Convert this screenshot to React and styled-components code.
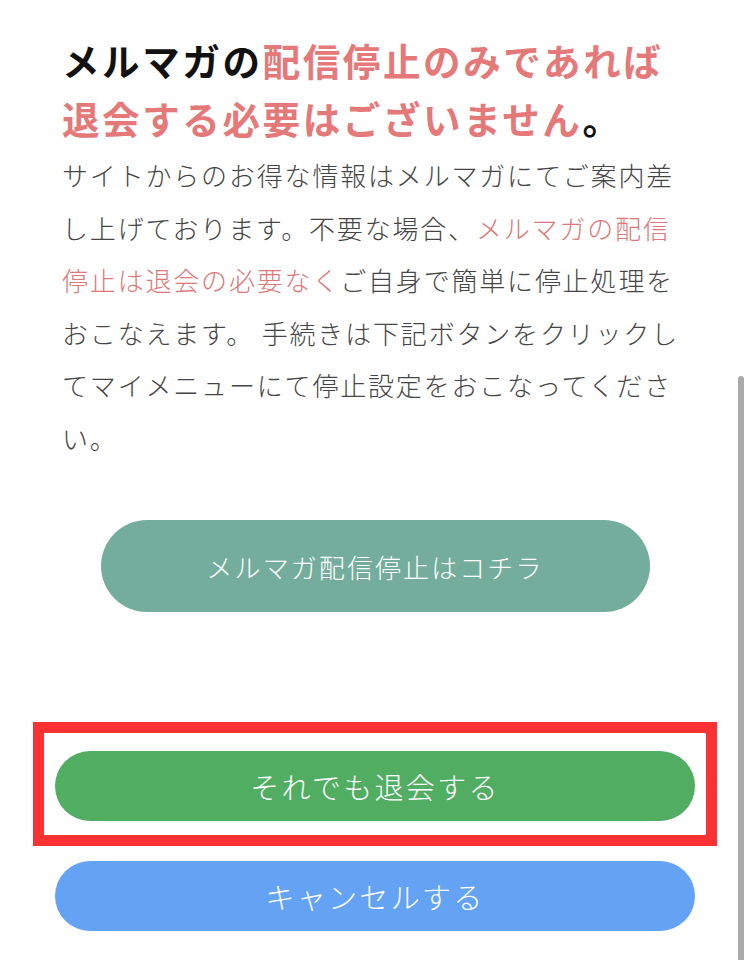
import React from 'react';
import styled, { createGlobalStyle } from 'styled-components';

const GlobalStyle = createGlobalStyle`
  html, body {
    margin: 0;
    padding: 0;
    background: #fff;
  }
  body {
    font-family: "Noto Sans CJK JP", "Noto Sans", sans-serif;
    overflow: hidden;
  }
`

const Page = styled.div`
  position: relative;
  width: 750px;
  height: 960px;
  display: flex;
  flex-direction: column;
  align-items: center;
  padding-top: 31px;
  box-sizing: border-box;
`

const Text = styled.div`
  width: 626px;
  align-self: flex-start;
  margin-left: 62px;
`

const Title = styled.h2`
  margin: 0;
  font-size: 37.5px;
  line-height: 58px;
  font-weight: 700;
  letter-spacing: 0.07em;
  color: #111;
`

const Pink = styled.span`
  color: ${p => (p.$soft ? '#dd7878' : '#e57878')};
`

const Body = styled.p`
  margin: 2px 0 0;
  font-size: 26px;
  line-height: 52.5px;
  font-weight: 300;
  letter-spacing: 0.07em;
  color: #454545;
`

const PillButton = styled.button`
  display: flex;
  align-items: center;
  justify-content: center;
  border: none;
  border-radius: 999px;
  width: ${p => p.$w}px;
  height: ${p => p.$h}px;
  background: ${p => p.$bg};
  color: #fff;
  font-family: inherit;
  font-size: ${p => p.$fs}px;
  font-weight: 300;
  letter-spacing: 0.08em;
  padding: 0;
  cursor: pointer;
`

const StopButton = styled(PillButton)`
  margin-top: 56px;
`

const Highlight = styled.div`
  margin-top: 110px;
  width: 684px;
  box-sizing: border-box;
  border: 11px solid #fb3234;
  padding: 18px 11px 14px;
`

const CancelButton = styled(PillButton)`
  margin-top: 15px;
`

const Scrollbar = styled.div`
  position: absolute;
  right: 6px;
  top: 376px;
  bottom: 0;
  width: 6px;
  border-radius: 3px 3px 0 0;
  background: #ababab;
`

export default function App() {
  return (
    <>
      <GlobalStyle />
      <Page>
        <Text>
          <Title>
            メルマガの<Pink>配信停止のみであれば退会する必要はございません</Pink>。
          </Title>
          <Body>
            サイトからのお得な情報はメルマガにてご案内差し上げております。不要な場合、
            <Pink $soft>メルマガの配信停止は退会の必要なく</Pink>
            ご自身で簡単に停止処理をおこなえます。 手続きは下記ボタンをクリックしてマイメニューにて停止設定をおこなってください。
          </Body>
        </Text>

        <StopButton $w={549} $h={92} $fs={26} $bg="#74ad9b">
          メルマガ配信停止はコチラ
        </StopButton>

        <Highlight>
          <PillButton $w={640} $h={70} $fs={29} $bg="#51ad62">
            それでも退会する
          </PillButton>
        </Highlight>

        <CancelButton $w={640} $h={70} $fs={29} $bg="#64a3f4">
          キャンセルする
        </CancelButton>

        <Scrollbar />
      </Page>
    </>
  );
}
